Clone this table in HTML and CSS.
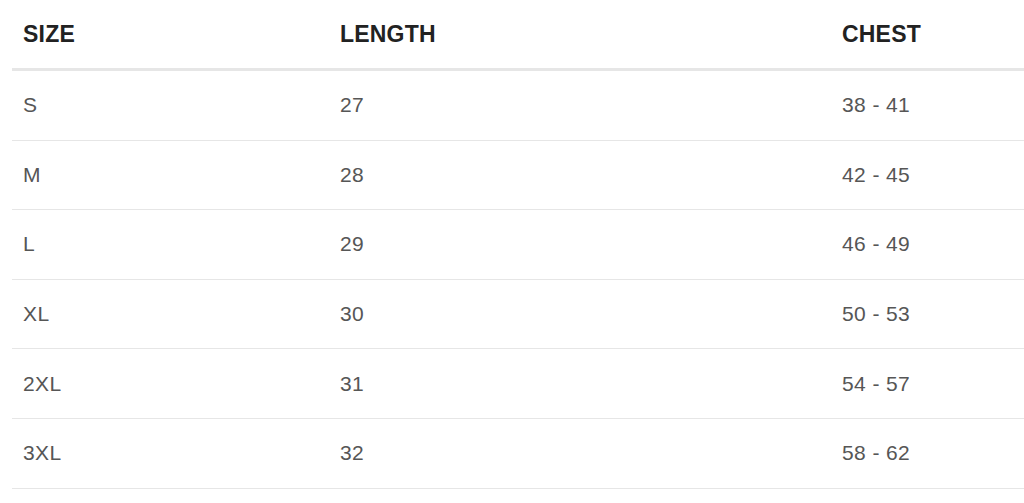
FILE: index.html
```html
<!DOCTYPE html>
<html>
<head>
<meta charset="utf-8">
<link rel="stylesheet" href="styles.css">
</head>
<body>
<div class="chart">
  <div class="row head">
    <div class="cell">SIZE</div>
    <div class="cell">LENGTH</div>
    <div class="cell">CHEST</div>
  </div>
  <div class="row"><div class="cell">S</div><div class="cell">27</div><div class="cell">38 - 41</div></div>
  <div class="row"><div class="cell">M</div><div class="cell">28</div><div class="cell">42 - 45</div></div>
  <div class="row"><div class="cell">L</div><div class="cell">29</div><div class="cell">46 - 49</div></div>
  <div class="row"><div class="cell">XL</div><div class="cell">30</div><div class="cell">50 - 53</div></div>
  <div class="row"><div class="cell">2XL</div><div class="cell">31</div><div class="cell">54 - 57</div></div>
  <div class="row"><div class="cell">3XL</div><div class="cell">32</div><div class="cell">58 - 62</div></div>
</div>
</body>
</html>
```

FILE: styles.css
```css
html, body {
  margin: 0;
  padding: 0;
  background: #ffffff;
}
body {
  font-family: "Liberation Sans", Arial, sans-serif;
  overflow: hidden;
}
.chart {
  margin-left: 12px;
  display: flex;
  flex-direction: column;
}
.row {
  display: grid;
  grid-template-columns: 317px 502px 1fr;
  align-items: center;
  box-sizing: border-box;
  height: 69.6px;
  border-bottom: 1px solid #e6e6e6;
  color: #565656;
  font-size: 21px;
  letter-spacing: 0.4px;
}
.row.head {
  height: 71px;
  border-bottom: 3px solid #e6e6e6;
  color: #222222;
  font-weight: bold;
  font-size: 23px;
  letter-spacing: 0.2px;
}
.cell {
  padding-left: 11px;
  line-height: 24px;
}
```
